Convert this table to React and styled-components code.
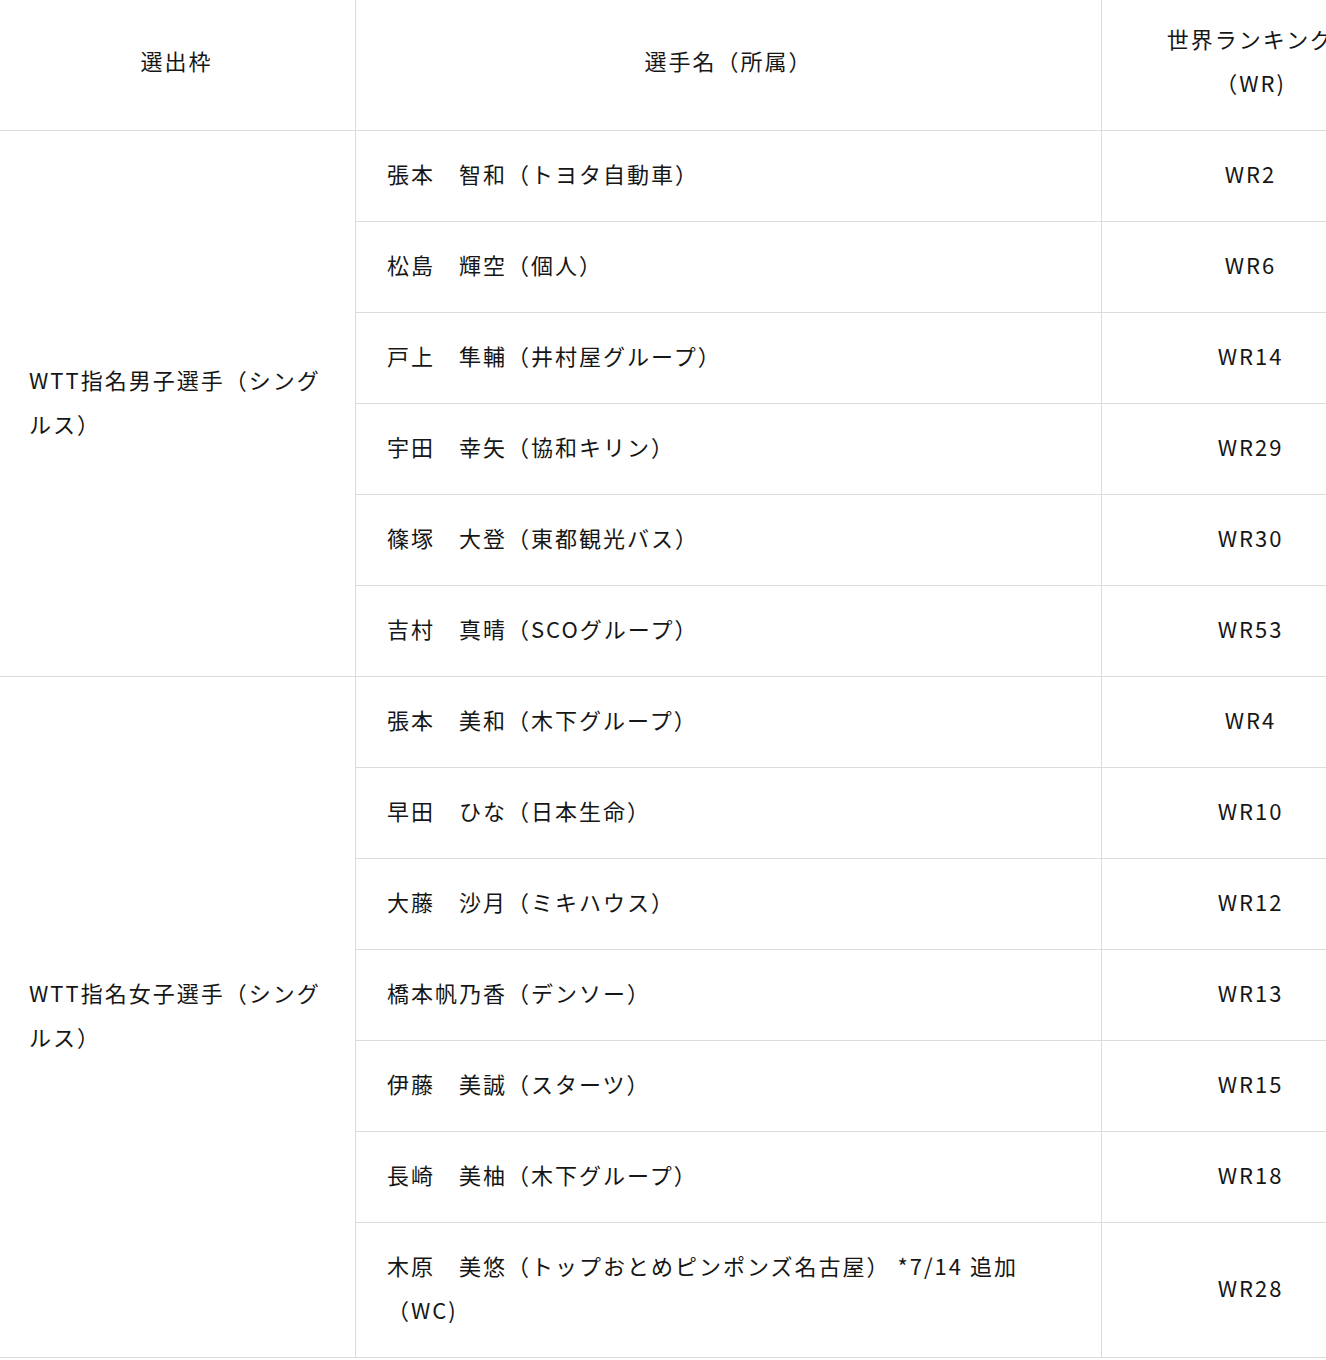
import styled, { createGlobalStyle } from 'styled-components';

const GlobalStyle = createGlobalStyle`
  html, body {
    margin: 0;
    padding: 0;
    background: #fff;
    overflow: hidden;
  }
  body {
    font-family: "Noto Sans CJK JP", "Noto Sans", sans-serif;
    color: #161616;
  }
`;

const groups = [
  {
    label: 'WTT指名男子選手（シングルス）',
    players: [
      ['張本　智和（トヨタ自動車）', 'WR2'],
      ['松島　輝空（個人）', 'WR6'],
      ['戸上　隼輔（井村屋グループ）', 'WR14'],
      ['宇田　幸矢（協和キリン）', 'WR29'],
      ['篠塚　大登（東都観光バス）', 'WR30'],
      ['吉村　真晴（SCOグループ）', 'WR53'],
    ],
  },
  {
    label: 'WTT指名女子選手（シングルス）',
    players: [
      ['張本　美和（木下グループ）', 'WR4'],
      ['早田　ひな（日本生命）', 'WR10'],
      ['大藤　沙月（ミキハウス）', 'WR12'],
      ['橋本帆乃香（デンソー）', 'WR13'],
      ['伊藤　美誠（スターツ）', 'WR15'],
      ['長崎　美柚（木下グループ）', 'WR18'],
      ['木原　美悠（トップおとめピンポンズ名古屋） *7/14 追加（WC)', 'WR28'],
    ],
  },
];

export default function App() {
  return (
    <>
      <GlobalStyle />
      <Frame>
        <Table>
          <colgroup>
            <col style={{ width: 358 }} />
            <col style={{ width: 746 }} />
            <col style={{ width: 298 }} />
          </colgroup>
          <thead>
            <tr>
              <HeadCell>選出枠</HeadCell>
              <HeadCell>選手名（所属）</HeadCell>
              <HeadCell>
                世界ランキング
                <br />
                （WR)
              </HeadCell>
            </tr>
          </thead>
          <tbody>
            {groups.map((g) =>
              g.players.map(([name, rank], i) => (
                <tr key={name}>
                  {i === 0 && <GroupCell rowSpan={g.players.length}>{g.label}</GroupCell>}
                  <Cell>{name}</Cell>
                  <Cell $center>{rank}</Cell>
                </tr>
              ))
            )}
          </tbody>
        </Table>
      </Frame>
    </>
  );
}

// the table in the shot is wider than the window and cut on the left/top
const Frame = styled.div`
  margin: -5px 0 0 -3px;
  width: 1402px;
`;

const Table = styled.table`
  width: 1402px;
  table-layout: fixed;
  border-collapse: collapse;
  font-size: 22px;
  line-height: 44px;
  letter-spacing: 2px;
`;

const HeadCell = styled.th`
  font-weight: 400;
  text-align: center;
  vertical-align: middle;
  padding: 20px 31px 26px;
  border: 1px solid #dcdcdc;
`;

const Cell = styled.td`
  padding: 20px 31px 26px;
  border: 1px solid #dcdcdc;
  vertical-align: middle;
  text-align: ${(p) => (p.$center ? 'center' : 'left')};
`;

const GroupCell = styled(Cell)`
  padding-right: 28px;
`;
